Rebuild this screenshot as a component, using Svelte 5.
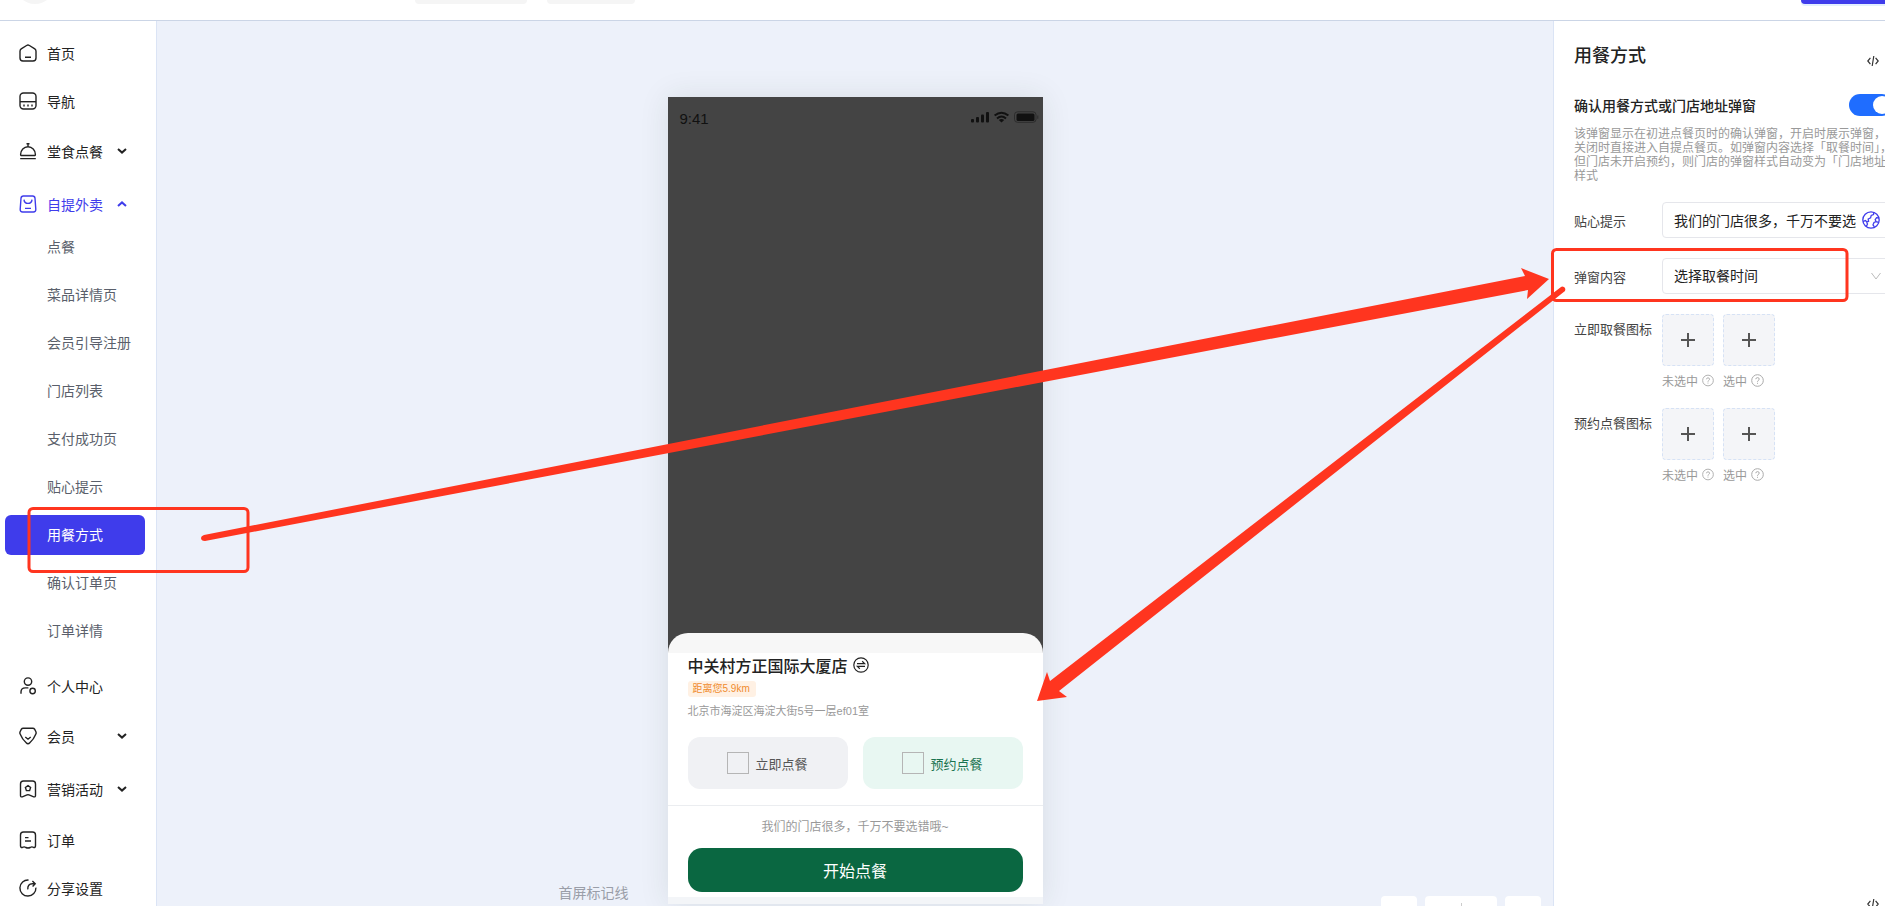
<script lang="ts">
	type MenuItem = { label: string; icon: string; children?: string[]; group?: boolean };

	const menu: MenuItem[] = [
		{ label: '首页', icon: 'home' },
		{ label: '导航', icon: 'nav' },
		{ label: '堂食点餐', icon: 'dish', group: true },
		{
			label: '自提外卖',
			icon: 'bag',
			group: true,
			children: [
				'点餐',
				'菜品详情页',
				'会员引导注册',
				'门店列表',
				'支付成功页',
				'贴心提示',
				'用餐方式',
				'确认订单页',
				'订单详情'
			]
		},
		{ label: '个人中心', icon: 'user' },
		{ label: '会员', icon: 'gem', group: true },
		{ label: '营销活动', icon: 'promo', group: true },
		{ label: '订单', icon: 'order' },
		{ label: '分享设置', icon: 'share' }
	];

	const uploads = ['立即取餐图标', '预约点餐图标'];

	let openGroup = $state('自提外卖');
	let current = $state('用餐方式');
	let popupOn = $state(true);
	let tip = $state('我们的门店很多，千万不要选错哦~');
	let popupContent = $state('选择取餐时间');
	let mode = $state('预约点餐');
</script>

{#snippet menuIcon(name: string)}
	<svg class="menu-icon" viewBox="0 0 18 18" aria-hidden="true">
		{#if name === 'home'}
			<path d="M1 7.2Q1 5.7 2.2 4.9L7.6 1.5Q9 .6 10.4 1.5L15.8 4.9Q17 5.7 17 7.2V14Q17 17 14 17H4Q1 17 1 14ZM6 13.3H12" />
		{:else if name === 'nav'}
			<rect x="1" y="1" width="16" height="16" rx="3.5" />
			<path d="M1 9.7H17" />
			<path d="M4.3 13.5h1.4M8.3 13.5h1.4M12.3 13.5h1.4" stroke-width="1.8" />
		{:else if name === 'dish'}
			<path d="M2 13.5Q1.6 13.5 1.6 12.6A7.4 7.8 0 0 1 16.4 12.6Q16.4 13.5 16 13.5ZM7.5 1.8H10.5M9 2V4.5M1.2 16.6H16.8" />
		{:else if name === 'bag'}
			<path d="M4.4 1H13.6Q15.8 1 16 3.2L16.8 14.3Q16.9 17 14.4 17H3.6Q1.1 17 1.2 14.3L2 3.2Q2.2 1 4.4 1ZM5 4.6Q5.3 8.4 9 8.4Q12.7 8.4 13 4.6M6 13.4H12" />
		{:else if name === 'user'}
			<circle cx="9" cy="4.6" r="3.7" />
			<circle cx="13.6" cy="14" r="2.7" />
			<path d="M2 16.8V15Q2 10.9 6.4 10.9H9.4" />
		{:else if name === 'gem'}
			<path d="M4.2 1.2H13.8Q15 1.2 15.6 2.2L16.9 4.8Q17.5 6.2 16.6 7.4Q14.6 12.4 10.8 15.8Q9 17.8 7.2 15.8Q3.4 12.4 1.4 7.4Q.5 6.2 1.1 4.8L2.4 2.2Q3 1.2 4.2 1.2ZM6.3 10L9 12.2L11.7 10" />
		{:else if name === 'promo'}
			<path d="M4.5 1H13.5Q16.5 1 16.5 4V15.5Q16.5 17.3 14.7 16.8L10 14.9Q9 14.5 8 14.9L3.3 16.8Q1.5 17.3 1.5 15.5V4Q1.5 1 4.5 1Z" />
			<path d="M9 5.6L11.6 7.5L10.6 10.6H7.4L6.4 7.5Z" />
		{:else if name === 'order'}
			<path d="M4.5 1H13.5Q16.5 1 16.5 4V14.8Q16.5 16.6 14.7 16.5Q12.8 15.2 11.2 16.5Q9 17.6 6.8 16.5Q5.2 15.2 3.3 16.5Q1.5 16.6 1.5 14.8V4Q1.5 1 4.5 1ZM6 6.6H9.5M6 10H12" />
		{:else}
			<path d="M9.6 1.1A8 8 0 1 0 16.9 8.6M8.8 10.4Q8.4 5 13.4 4.8H15.8M13.4 2L16.2 4.8L13.6 7.4" />
		{/if}
	</svg>
{/snippet}

{#snippet codeIcon()}
	<svg width="12" height="12" viewBox="0 0 12 12" aria-hidden="true">
		<path d="M3.4 2.8L.8 6L3.4 9.2M8.6 2.8L11.2 6L8.6 9.2M6.8 1L5.2 11" fill="none" stroke="#333" stroke-width="1.2" />
	</svg>
{/snippet}

<div class="page">
	<header class="topbar">
		<span class="avatar"></span>
		<span class="top-chip wide"></span>
		<span class="top-chip"></span>
		<button class="publish" aria-label="发布"></button>
	</header>

	<div class="body">
		<nav class="sidebar">
			{#each menu as item}
				{#if item.group}
					<div class="group">
						<button
							class="menu-item"
							class:open={openGroup === item.label}
							onclick={() => (openGroup = openGroup === item.label ? '' : item.label)}
						>
							{@render menuIcon(item.icon)}
							<span class="menu-text">{item.label}</span>
							<svg class="arrow" viewBox="0 0 10 6" aria-hidden="true"><path d="M1 1L5 4.6L9 1" /></svg>
						</button>
						{#if openGroup === item.label && item.children}
							<div class="sub-list">
								{#each item.children as child}
									<a
										href="#{child}"
										class="sub-item"
										class:active={current === child}
										onclick={() => (current = child)}>{child}</a
									>
								{/each}
							</div>
						{/if}
					</div>
				{:else}
					<a class="menu-item single" href="#{item.label}">
						{@render menuIcon(item.icon)}
						<span class="menu-text">{item.label}</span>
					</a>
				{/if}
			{/each}
		</nav>

		<main class="canvas">
			<div class="phone">
				<div class="status">
					<span>9:41</span>
					<svg width="68" height="12" viewBox="0 0 68 12" aria-hidden="true">
						<g fill="#111">
							<rect x="0" y="8" width="3" height="3.5" rx="1" />
							<rect x="5" y="6" width="3" height="5.5" rx="1" />
							<rect x="10" y="3.5" width="3" height="8" rx="1" />
							<rect x="15" y="1" width="3" height="10.5" rx="1" />
							<path d="M30.5 11.5L27.8 8.9Q30.5 7 33.2 8.9Z" />
							<rect x="45.5" y="2.5" width="18" height="7.5" rx="1.5" />
						</g>
						<g fill="none" stroke="#111">
							<path d="M23.6 4.6Q30.5 -1.2 37.4 4.6" stroke-width="2" />
							<path d="M26 7.4Q30.5 3.6 35 7.4" stroke-width="2" />
							<rect x="43.5" y=".8" width="21.5" height="10.5" rx="3" stroke="#2c2c2c" />
							<path d="M66.8 4.5V7.8" stroke="#2c2c2c" />
						</g>
					</svg>
				</div>

				<div class="sheet">
					<div class="sheet-main">
						<h3 class="shop">
							中关村方正国际大厦店
							<svg width="16" height="16" viewBox="0 0 16 16" fill="none" stroke="#222" stroke-width="1.2" aria-hidden="true">
								<circle cx="8" cy="8" r="7.2" />
								<path d="M4 6.6H11.6L9.2 4.3M12 9.4H4.4L6.8 11.7" />
							</svg>
						</h3>
						<span class="distance">距离您5.9km</span>
						<p class="address">北京市海淀区海淀大街5号一层ef01室</p>
						<div class="modes">
							{#each ['立即点餐', '预约点餐'] as m}
								<button class="mode" class:selected={mode === m} onclick={() => (mode = m)}>
									<span class="mode-img"></span>{m}
								</button>
							{/each}
						</div>
					</div>
					<div class="sheet-foot">
						<p class="hint">{tip}</p>
						<button class="start">开始点餐</button>
					</div>
				</div>
				<span class="fold-label">首屏标记线</span>
			</div>

			<div class="zoom-bar">
				<button aria-label="缩小"></button>
				<button class="zoom-value" aria-label="缩放比例"></button>
				<button aria-label="放大"></button>
			</div>
		</main>

		<aside class="panel">
			<section class="settings">
				<div class="panel-head">
					<h2>用餐方式</h2>
					<button class="code" aria-label="代码">{@render codeIcon()}</button>
				</div>

				<div class="switch-row">
					<label for="popup">确认用餐方式或门店地址弹窗</label>
					<input id="popup" class="switch" type="checkbox" bind:checked={popupOn} />
				</div>
				<p class="desc">
					该弹窗显示在初进点餐页时的确认弹窗，开启时展示弹窗，关闭时直接进入自提点餐页。如弹窗内容选择「取餐时间」，但门店未开启预约，则门店的弹窗样式自动变为「门店地址」样式
				</p>

				<div class="field">
					<label for="tip">贴心提示</label>
					<div class="control">
						<input id="tip" type="text" bind:value={tip} />
						<svg class="globe" viewBox="0 0 18 18" aria-hidden="true">
							<circle cx="9" cy="9" r="8.2" />
							<path d="M1 10.5L3.4 9.6L5 11L6.6 10.3L6.2 8L8.6 6.8L9.2 4.4L11.5 3.6L11.8 1.4M4.2 15.6L5.5 13L4.6 11.2M16.8 7L14.6 6.6L13.2 8.6L14 10.6L12 11.4L11 13.8L12.4 15.8M14 10.6L16.6 11.4" />
						</svg>
					</div>
				</div>

				<div class="field">
					<label for="content">弹窗内容</label>
					<div class="control">
						<select id="content" bind:value={popupContent}>
							<option>选择取餐时间</option>
							<option>门店地址</option>
						</select>
						<svg class="caret" viewBox="0 0 10 8" aria-hidden="true"><path d="M.5 1L5 7L9.5 1" /></svg>
					</div>
				</div>

				{#each uploads as name}
					<div class="upload-row">
						<span class="upload-label">{name}</span>
						{#each ['未选中', '选中'] as state}
							<div class="upload">
								<button class="upload-box" aria-label="{name} {state}">
									<svg width="14" height="14" viewBox="0 0 14 14" aria-hidden="true"><path d="M7 0V14M0 7H14" stroke="#555" stroke-width="2" /></svg>
								</button>
								<span class="caption">
									{state}
									<svg width="13" height="13" viewBox="0 0 13 13" fill="none" stroke="#aaa" aria-hidden="true">
										<circle cx="6.5" cy="6.5" r="5.8" />
										<path d="M4.8 5.2Q4.9 3.6 6.5 3.6Q8.2 3.6 8.2 5.1Q8.2 6 7.2 6.5Q6.5 6.9 6.5 7.8M6.5 8.8V9.8" />
									</svg>
								</span>
							</div>
						{/each}
					</div>
				{/each}
			</section>
			<section class="settings">
				<div class="panel-head">
					<button class="code" aria-label="代码">{@render codeIcon()}</button>
				</div>
			</section>
		</aside>
	</div>

	<!-- hand-drawn marks over the editor -->
	<svg class="marks" width="1885" height="906" viewBox="0 0 1885 906" aria-hidden="true">
		<g fill="none" stroke="#ff351f" stroke-width="3">
			<rect x="29" y="508.5" width="219" height="63" rx="4" />
			<rect x="1552.5" y="249.5" width="294.5" height="51" rx="4" />
		</g>
		<g fill="#ff351f">
			<path d="M204 535L1525 276L1521 268L1549 279L1527 299L1528 290L205 541Q201 541 201 538Q201 536 204 535Z" />
			<path d="M1561 287L1050 681L1047 672L1037 701L1067 697L1059 691L1565 291Q1566 288 1564 287Q1562 286 1561 287Z" />
		</g>
	</svg>
</div>

<style>
	:global(body) {
		background: #fff;
	}

	.page {
		position: relative;
		display: flex;
		flex-direction: column;
		height: 100vh;
		overflow: hidden;
		font-family: 'Liberation Sans', 'Noto Sans CJK SC', sans-serif;
		font-size: 14px;
		color: #222;
	}

	button,
	input,
	select {
		font: inherit;
		color: inherit;
		border: 0;
		margin: 0;
		padding: 0;
		box-sizing: border-box;
	}

	button {
		cursor: pointer;
		background: none;
	}

	a {
		color: inherit;
		text-decoration: none;
	}

	h2, h3, p {
		margin: 0;
	}

	/* top bar */
	.topbar {
		display: flex;
		align-items: flex-end;
		flex: none;
		height: 4px;
		padding: 0 0 16px 15px;
		border-bottom: 1px solid #cbd5e6;
		overflow: hidden;
	}

	.avatar {
		flex: none;
		width: 40px;
		height: 40px;
		margin-right: 360px;
		border-radius: 50%;
		background: #f5f5f5;
	}

	.top-chip {
		flex: none;
		width: 88px;
		height: 32px;
		border-radius: 4px;
		background: #f5f5f5;
	}

	.top-chip.wide {
		width: 112px;
		margin-right: 20px;
	}

	.publish {
		flex: none;
		width: 84px;
		height: 32px;
		margin-left: auto;
		border-radius: 4px 0 0 4px;
		background: #3f3ceb;
		box-shadow: 0 2px 0 #e3efff;
	}

	.body {
		display: flex;
		flex: 1;
		min-height: 0;
	}

	/* sidebar */
	.sidebar {
		flex: none;
		width: 156px;
		padding-top: 8px;
		border-right: 1px solid #dbe4f5;
		overflow: hidden;
	}

	.menu-item {
		display: flex;
		align-items: center;
		width: 100%;
		height: 40px;
		padding-left: 19px;
		text-align: left;
		box-sizing: border-box;
	}

	.menu-item.single {
		height: 48px;
	}

	.menu-item.open {
		color: #3f3ceb;
	}

	.menu-icon {
		width: 18px;
		height: 18px;
		margin-right: 10px;
		fill: none;
		stroke: currentColor;
		stroke-width: 1.4;
	}

	.menu-text {
		width: 70px;
	}

	.arrow {
		width: 10px;
		height: 6px;
		fill: none;
		stroke: currentColor;
		stroke-width: 2;
	}

	.open .arrow {
		transform: rotate(180deg);
	}

	.group {
		padding: 6px 0 7px;
	}

	.sub-list {
		display: flex;
		flex-direction: column;
		gap: 8px;
		padding: 3px 11px 4px 5px;
	}

	.sub-item {
		height: 40px;
		padding-left: 42px;
		border-radius: 6px;
		line-height: 40px;
		color: #5a5f6b;
	}

	.sub-item.active {
		background: #3f3ceb;
		color: #fff;
	}

	/* canvas */
	.canvas {
		position: relative;
		flex: 1;
		min-width: 0;
		background: #edf1fa;
		overflow: hidden;
	}

	.phone {
		position: relative;
		display: flex;
		flex-direction: column;
		width: 375px;
		min-height: 807px;
		margin: 76px auto 0;
		background: linear-gradient(#444 700px, #f3f5f8 700px);
		box-shadow: 0 0 28px rgba(40, 60, 40, .1);
	}

	.status {
		display: flex;
		justify-content: space-between;
		align-items: flex-start;
		flex: 1;
		padding: 14px 4px 0 12px;
		font-size: 15px;
		line-height: 16px;
		color: #111;
	}

	.sheet {
		margin-bottom: 7px;
		padding-top: 20px;
		border-radius: 20px 20px 0 0;
		background: linear-gradient(#f7f7f7 20px, #fff 20px);
	}

	.sheet-main {
		padding: 0 20px 16px;
		border-bottom: 1px solid #ebedf0;
	}

	.shop {
		display: flex;
		align-items: center;
		gap: 5px;
		height: 24px;
		margin-bottom: 4px;
		font-size: 16px;
		font-weight: 500;
	}

	.distance {
		display: block;
		width: fit-content;
		padding: 0 6px 0 5px;
		border-radius: 3px;
		font-size: 10px;
		line-height: 16px;
		color: #f08c2e;
		background: #fff1e4;
	}

	.address {
		margin: 6px 0 18px;
		font-size: 11px;
		line-height: 16px;
		color: #999;
	}

	.modes {
		display: flex;
		gap: 15px;
	}

	.mode {
		display: flex;
		align-items: center;
		justify-content: center;
		gap: 6px;
		flex: 1;
		height: 52px;
		border-radius: 12px;
		font-size: 13px;
		color: #555;
		background: #f0f1f4;
	}

	.mode.selected {
		color: #1a7350;
		background: #e8f7f2;
	}

	.mode-img {
		width: 20px;
		height: 20px;
		border: 1px solid #b5b5b5;
	}

	.sheet-foot {
		padding: 11px 20px 5px;
	}

	.hint {
		margin-bottom: 11px;
		font-size: 12px;
		line-height: 20px;
		text-align: center;
		color: #999;
	}

	.start {
		display: block;
		width: 100%;
		height: 44px;
		border-radius: 14px;
		font-size: 16px;
		color: #fff;
		background: #0a6741;
	}

	.fold-label {
		position: absolute;
		right: 414px;
		bottom: 1px;
		line-height: 20px;
		white-space: nowrap;
		color: #9a9ea8;
	}

	.zoom-bar {
		position: absolute;
		right: 12px;
		bottom: -22px;
		display: flex;
		gap: 8px;
	}

	.zoom-bar button {
		width: 36px;
		height: 32px;
		border-radius: 4px;
		background: #fff;
	}

	.zoom-bar .zoom-value {
		width: 72px;
		background: linear-gradient(#ccc, #ccc) center / 1px 18px no-repeat #fff;
	}

	/* settings panel */
	.panel {
		flex: none;
		width: 331px;
		border-left: 1px solid #dbe4f5;
		background: #fff;
		overflow: hidden;
	}

	.settings {
		width: 319px;
		min-height: calc(100vh - 83px);
		padding: 20px 20px 0;
	}

	.panel-head {
		display: flex;
		justify-content: space-between;
		align-items: center;
		height: 26px;
		margin-bottom: 27px;
	}

	h2 {
		font-size: 18px;
		font-weight: 500;
	}

	.code {
		display: flex;
		margin: 14px 14px 0 auto;
	}

	.switch-row {
		display: flex;
		justify-content: space-between;
		align-items: center;
		height: 22px;
		font-weight: 500;
	}

	.switch {
		appearance: none;
		width: 44px;
		height: 22px;
		border-radius: 11px;
		background: #bbb;
	}

	.switch::before {
		content: '';
		display: block;
		width: 18px;
		height: 18px;
		margin: 2px;
		border-radius: 50%;
		background: #fff;
	}

	.switch:checked {
		background: #1f6dff;
	}

	.switch:checked::before {
		margin-left: 24px;
	}

	.desc {
		margin: 11px 0 19px;
		font-size: 12px;
		line-height: 14px;
		color: #999;
	}

	.field {
		display: flex;
		align-items: center;
		margin-bottom: 20px;
	}

	.field label,
	.upload-label {
		flex: none;
		width: 88px;
		font-size: 13px;
		color: #444;
	}

	.control {
		position: relative;
		flex: 1;
	}

	.control input,
	.control select {
		display: block;
		width: 100%;
		height: 36px;
		padding: 0 36px 0 11px;
		border: 1px solid #e5e6eb;
		border-radius: 4px;
		background: #fff;
		appearance: none;
	}

	.globe {
		position: absolute;
		right: 13px;
		top: 9px;
		width: 18px;
		height: 18px;
		fill: none;
		stroke: #3f3ceb;
		stroke-width: 1.3;
	}

	.caret {
		position: absolute;
		right: 12px;
		top: 14px;
		width: 10px;
		height: 8px;
		fill: none;
		stroke: #bbb;
	}

	.upload-row {
		display: flex;
		margin-bottom: 17px;
	}

	.upload-label {
		line-height: 32px;
	}

	.upload {
		width: 52px;
		margin-right: 9px;
	}

	.upload-box {
		display: flex;
		align-items: center;
		justify-content: center;
		width: 52px;
		height: 52px;
		border: 1px dashed #d6e2f5;
		border-radius: 4px;
		background: #f4f5f8;
	}

	.caption {
		display: flex;
		align-items: center;
		gap: 4px;
		height: 22px;
		margin-top: 3px;
		font-size: 12px;
		white-space: nowrap;
		color: #999;
	}

	.marks {
		position: absolute;
		left: 0;
		top: 0;
		pointer-events: none;
	}
</style>
